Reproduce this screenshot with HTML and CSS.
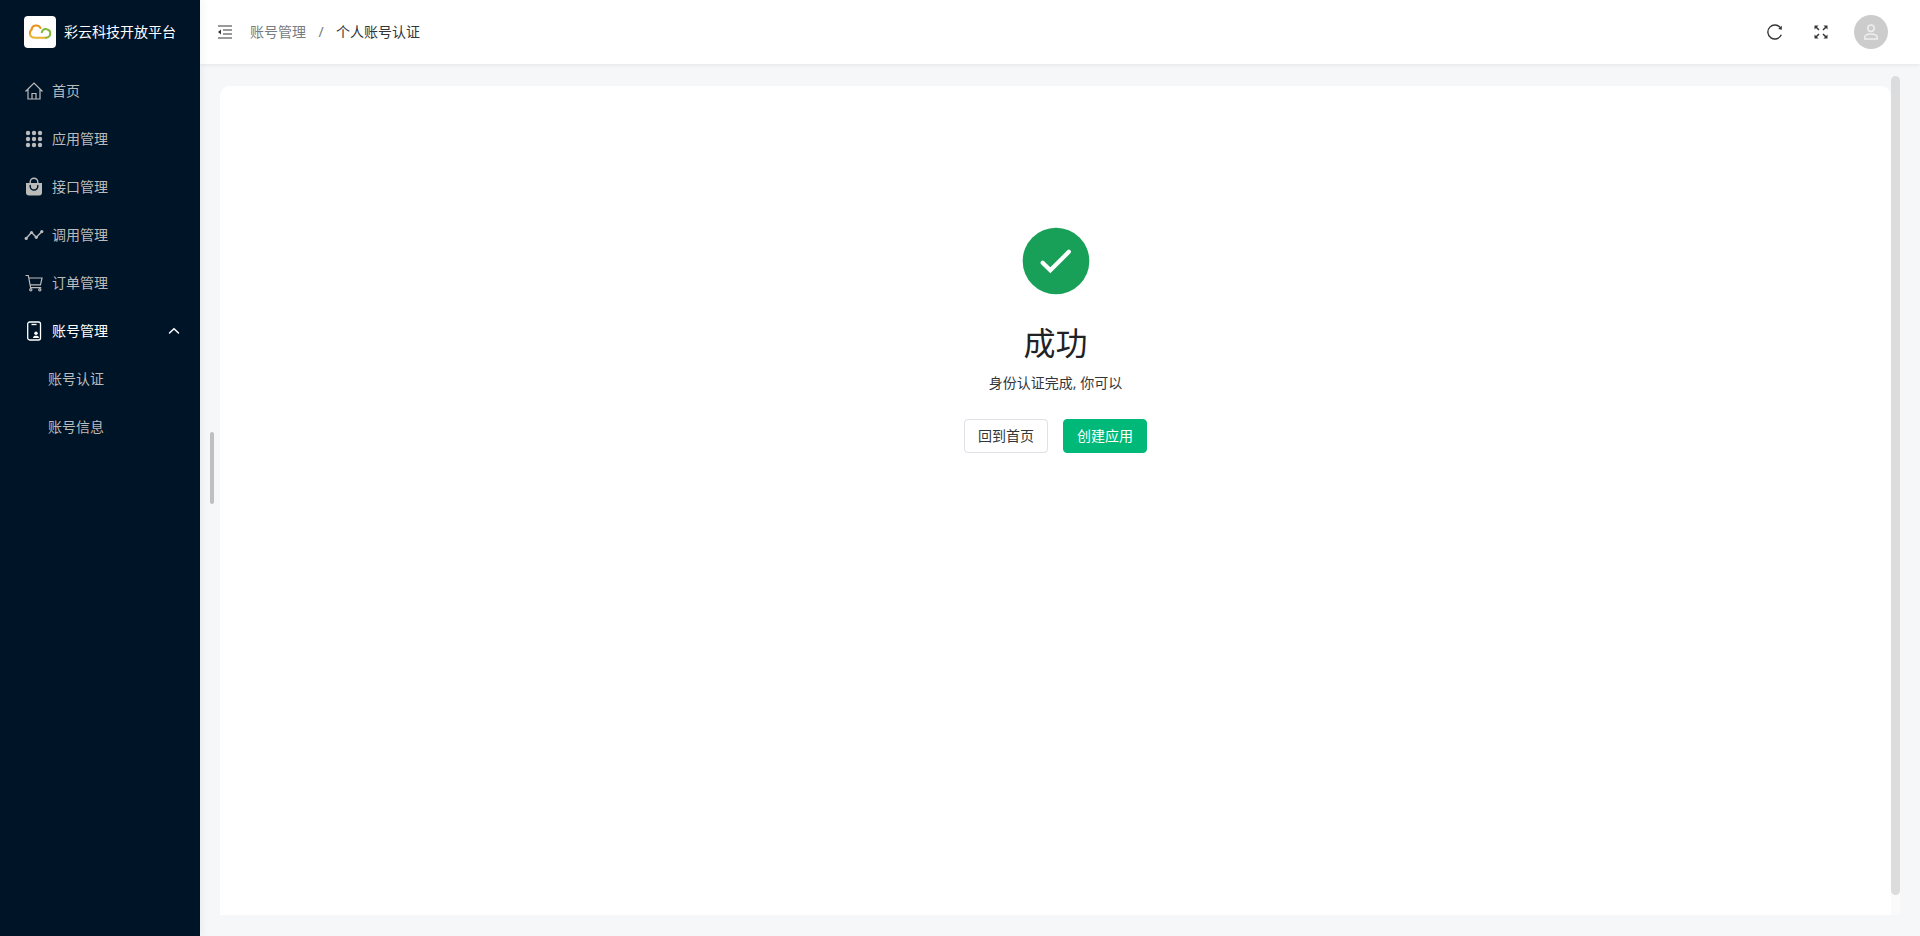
FILE: index.html
```
<!DOCTYPE html>
<html lang="zh-CN">
<head>
  <meta charset="UTF-8">
  <meta name="viewport" content="width=device-width, initial-scale=1.0">
  <title>个人账号认证 - 彩云科技开放平台</title>
  <link rel="stylesheet" href="styles.css">
</head>
<body>
  <aside class="sidebar">
    <a class="brand" href="#">
      <span class="brand-logo">
        <svg width="24" height="24" viewBox="0 0 24 24" fill="none" stroke-width="2" stroke-linecap="round">
          <path d="M12.500 8A4.800 4.800 0 0 0 3.500 9.500" stroke="#ea9420"/>
          <path d="M3.500 9.500C2 11 1.500 12.500 2 14.500" stroke="#e99c22"/>
          <path d="M2 14.500Q3 17.700 7 17.700H18" stroke="#e9b32e"/>
          <path d="M13.800 12.200A4.300 4.300 0 1 1 18 17.700" stroke="#83b938"/>
        </svg>
      </span>
      <span>彩云科技开放平台</span>
    </a>
    <nav class="menu">
      <a class="menu-item" href="#">
        <svg viewBox="0 0 20 20" fill="none" stroke="currentColor" stroke-width="1.200">
          <path d="M1.500 10.500 10 2l8.500 8.500M4 8.500V18h12V8.500M8 18v-5.500h4V18"/>
        </svg>
        <span>首页</span>
      </a>
      <a class="menu-item" href="#">
        <svg viewBox="0 0 20 20" fill="currentColor">
          <circle cx="4" cy="4" r="2.200"/><circle cx="10" cy="4" r="2.200"/><circle cx="16" cy="4" r="2.200"/>
          <circle cx="4" cy="10" r="2.200"/><circle cx="10" cy="10" r="2.200"/><circle cx="16" cy="10" r="2.200"/>
          <circle cx="4" cy="16" r="2.200"/><circle cx="10" cy="16" r="2.200"/><circle cx="16" cy="16" r="2.200"/>
        </svg>
        <span>应用管理</span>
      </a>
      <a class="menu-item" href="#">
        <svg viewBox="0 0 20 20">
          <path d="M2 6h16v9.500a3 3 0 0 1-3 3H5a3 3 0 0 1-3-3z" fill="currentColor"/>
          <path d="M6.200 6V5a3.800 3.800 0 0 1 7.600 0v1" fill="none" stroke="currentColor" stroke-width="1.400"/>
          <path d="M6.200 8.500v.7a3.800 3.800 0 0 0 7.600 0v-.7" fill="none" stroke="#001428" stroke-width="1.400" stroke-linecap="round"/>
        </svg>
        <span>接口管理</span>
      </a>
      <a class="menu-item" href="#">
        <svg viewBox="0 0 20 20" fill="currentColor">
          <path d="M2 13.500 7.500 7.500l4.800 4.800L18 6.500" fill="none" stroke="currentColor" stroke-width="1.400"/>
          <circle cx="2.200" cy="13.400" r="1.600"/><circle cx="7.500" cy="7.500" r="1.600"/><circle cx="12.300" cy="12.300" r="1.600"/><circle cx="17.800" cy="6.600" r="1.600"/>
        </svg>
        <span>调用管理</span>
      </a>
      <a class="menu-item" href="#">
        <svg viewBox="0 0 20 20" fill="none" stroke="currentColor" stroke-width="1.200">
          <path d="M1.500 2.500h2.800l2.300 12.200h10.600M4.800 5h13.200l-1.500 6.800H6"/>
          <circle cx="6.800" cy="16.800" r="1.100"/><circle cx="15.800" cy="16.800" r="1.100"/>
        </svg>
        <span>订单管理</span>
      </a>
      <a class="menu-item active" href="#" aria-expanded="true">
        <svg viewBox="0 0 20 20" fill="none" stroke="currentColor" stroke-width="1.300">
          <rect x="3.700" y="1" width="12.800" height="18" rx="2"/>
          <path d="M7.500 3.500h5"/>
          <g fill="currentColor" stroke="none">
            <circle cx="12" cy="12.300" r="1.700"/>
            <path d="M9 17c0-1.600 1.300-2.200 3-2.200s3 .6 3 2.200z"/>
          </g>
        </svg>
        <span>账号管理</span>
        <svg class="arrow" viewBox="0 0 16 16" fill="none" stroke="currentColor" stroke-width="1.500" stroke-linecap="round">
          <path d="M3.500 10 8 5.700l4.500 4.300"/>
        </svg>
      </a>
      <a class="menu-item sub" href="#">账号认证</a>
      <a class="menu-item sub" href="#">账号信息</a>
    </nav>
    <div class="resize-bar"></div>
  </aside>

  <div class="page">
    <header class="header">
      <button class="icon-btn collapse" type="button" aria-label="折叠菜单">
        <svg width="18" height="18" viewBox="0 0 18 18" fill="none" stroke="currentColor" stroke-width="1.200">
          <path d="M2 3h14M7 7h9M7 11h9M2 15h14"/>
          <path d="M5 6.500v5L2 9z" fill="currentColor" stroke="none"/>
        </svg>
      </button>
      <nav class="breadcrumb">
        <a href="#">账号管理</a>
        <span class="separator">/</span>
        <span class="current">个人账号认证</span>
      </nav>
      <div class="actions">
        <button class="icon-btn" type="button" aria-label="刷新">
          <svg width="18" height="18" viewBox="0 0 18 18" fill="none" stroke="currentColor" stroke-width="1.400">
            <path d="M15.300 11.800A7 7 0 1 1 14.600 5"/>
            <path d="M15.800 2.800v4l-3.600-.8z" fill="currentColor" stroke="none"/>
          </svg>
        </button>
        <button class="icon-btn" type="button" aria-label="全屏">
          <svg width="18" height="18" viewBox="0 0 18 18" fill="none" stroke="currentColor" stroke-width="1.500">
            <path d="M3.500 3.500 7 7M14.500 3.500 11 7M3.500 14.500 7 11M14.500 14.500 11 11"/>
            <path d="M2.500 2.500h4l-4 4zM15.500 2.500h-4l4 4zM2.500 15.500h4l-4-4zM15.500 15.500h-4l4-4z" fill="currentColor" stroke="none"/>
          </svg>
        </button>
        <button class="avatar" type="button" aria-label="用户">
          <svg width="18" height="18" viewBox="0 0 18 18" fill="none" stroke="currentColor" stroke-width="1.500">
            <circle cx="9" cy="5.200" r="3.200"/>
            <path d="M2.700 16v-1.200c0-2.300 2.400-3.900 6.300-3.900s6.300 1.600 6.300 3.900V16z"/>
          </svg>
        </button>
      </div>
    </header>

    <main class="content">
      <section class="card">
        <svg class="result-icon" viewBox="0 0 48 48">
          <circle cx="24" cy="24" r="20" fill="#18a058"/>
          <path d="M16 25l4.600 4.600L31.700 18.500" fill="none" stroke="#fff" stroke-width="2.500" stroke-linecap="round"/>
        </svg>
        <h1>成功</h1>
        <p>身份认证完成, 你可以</p>
        <div class="result-actions">
          <button class="btn" type="button">回到首页</button>
          <button class="btn primary" type="button">创建应用</button>
        </div>
      </section>
      <div class="scroll-track"><div class="scroll-thumb"></div></div>
    </main>
  </div>
</body>
</html>
```
FILE: styles.css
```
* {
  box-sizing: border-box;
}
body {
  display: flex;
  min-height: 100vh;
  margin: 0;
  font-family: "Noto Sans", "Noto Sans CJK SC", sans-serif;
  font-size: 14px;
  line-height: 22px;
  color: #333639;
  background-color: #f5f7f9;
}
a {
  color: inherit;
  text-decoration: none;
}
button {
  font: inherit;
  cursor: pointer;
}

.sidebar {
  position: relative;
  flex: none;
  width: 200px;
  color: #bbb;
  background-color: #001428;
  box-shadow: 2px 0 8px rgba(29, 35, 41, 0.05);
  z-index: 2;
}
.brand {
  display: flex;
  align-items: center;
  gap: 8px;
  height: 64px;
  padding-left: 24px;
  color: #fff;
  white-space: nowrap;
}
.brand-logo {
  display: flex;
  align-items: center;
  justify-content: center;
  width: 32px;
  height: 32px;
  border-radius: 4px;
  background-color: #fff;
}
.menu {
  display: flex;
  flex-direction: column;
  gap: 6px;
  padding-top: 6px;
}
.menu-item {
  display: flex;
  align-items: center;
  gap: 8px;
  height: 42px;
  padding: 0 18px 0 24px;
}
.menu-item svg {
  width: 20px;
  height: 20px;
}
.menu-item .arrow {
  width: 16px;
  height: 16px;
  margin-left: auto;
}
.menu-item.active {
  color: #fff;
}
.menu-item.sub {
  padding-left: 48px;
}
.resize-bar {
  position: absolute;
  top: 50%;
  right: -14px;
  width: 4px;
  height: 72px;
  border-radius: 2px;
  background-color: #bfbfbf;
  transform: translateY(-50%);
}

.page {
  display: flex;
  flex: 1;
  flex-direction: column;
}
.header {
  display: flex;
  align-items: center;
  height: 64px;
  padding: 0 32px 0 16px;
  background-color: #fff;
  box-shadow: 0 1px 4px rgba(0, 21, 41, 0.08);
}
.icon-btn {
  display: flex;
  padding: 0;
  border: 0;
  color: #333639;
  background: none;
}
.breadcrumb {
  display: flex;
  gap: 12px;
  margin-left: 16px;
  color: #767c82;
}
.separator {
  width: 6px;
  text-align: center;
}
.breadcrumb .current {
  color: #333639;
}
.actions {
  display: flex;
  align-items: center;
  gap: 28px;
  margin-left: auto;
}
.avatar {
  display: flex;
  align-items: center;
  justify-content: center;
  width: 34px;
  height: 34px;
  margin-left: -4px;
  padding: 0;
  border: 0;
  border-radius: 50%;
  color: #eee;
  background-color: #ccc;
}

.content {
  display: flex;
  flex: 1;
  padding: 12px 20px 21px;
}
.card {
  display: flex;
  flex: 1;
  flex-direction: column;
  align-items: center;
  margin-top: 10px;
  padding: 135px 24px 24px;
  border-radius: 10px 10px 0 0;
  background-color: #fff;
}
.result-icon {
  width: 80px;
  height: 80px;
}
.card h1 {
  margin: 16px 0 0;
  font-size: 32px;
  font-weight: 400;
  line-height: 51px;
  color: #1f2225;
}
.card p {
  margin: 4px 0 0;
}
.result-actions {
  display: flex;
  gap: 15px;
  margin-top: 25px;
}
.btn {
  height: 34px;
  padding: 0 13px;
  border: 1px solid #e0e0e6;
  border-radius: 4px;
  color: #333639;
  background-color: #fff;
}
.btn.primary {
  border-color: #00b978;
  color: #fff;
  background-color: #00b978;
}
.scroll-track {
  width: 9px;
  background-color: #fafafa;
}
.scroll-thumb {
  height: calc(100% - 20px);
  border-radius: 5px;
  background-color: #dcdcdc;
}
```
